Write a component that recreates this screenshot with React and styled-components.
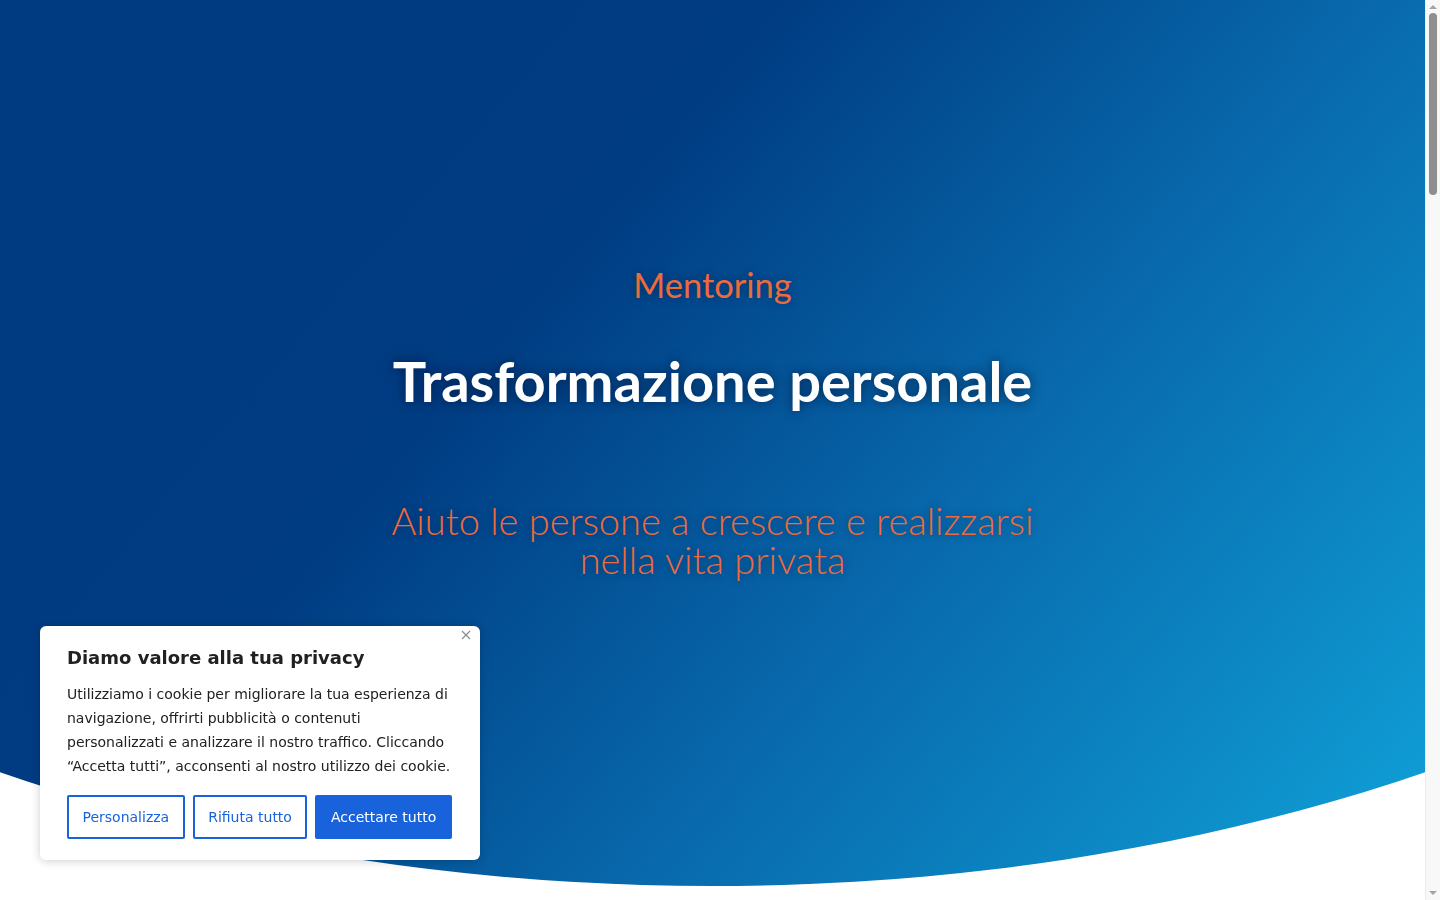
import React from 'react';
import styled, {createGlobalStyle} from 'styled-components';

const GlobalStyle = createGlobalStyle`
    html, body {
        margin: 0;
        padding: 0;
        background: #fff;
        overflow: hidden;
    }
    * {
        box-sizing: border-box;
    }
`;

const Viewport = styled.div`
    display: flex;
    height: 100vh;
`;

const Page = styled.main`
    flex: 1;
    min-width: 0;
    overflow: hidden;
    background: #fff;
`;

const Hero = styled.section`
    height: 886px;
    display: flex;
    flex-direction: column;
    align-items: center;
    padding-top: 262px;
    background: linear-gradient(130deg, #003a80 0%, #003c82 36%, #0868ab 63%, #10a2d9 100%);
    clip-path: ellipse(102% 886px at 50% 0%);
    font-family: Lato, "Open Sans", sans-serif;
    text-align: center;
`;

const Kicker = styled.div`
    color: #ec6a3c;
    font-size: 34.5px;
    font-weight: 400;
    line-height: 46px;
    text-shadow: 0 0 8px rgba(0, 20, 60, 0.45);
`;

const Title = styled.h1`
    margin: 41px 0 0;
    color: #fff;
    font-size: 56px;
    font-weight: 700;
    line-height: 64px;
    text-shadow: 0 0 12px rgba(0, 10, 40, 0.6);
`;

const Lead = styled.p`
    margin: 88px 0 0;
    color: #ec6a3c;
    font-size: 38px;
    font-weight: 300;
    line-height: 39px;
    text-shadow: 0 0 8px rgba(0, 20, 60, 0.45);
`;

const ScrollTrack = styled.aside`
    width: 15px;
    flex-shrink: 0;
    display: flex;
    flex-direction: column;
    align-items: center;
    background: #f8f8f8;
    border-left: 1px solid #ececec;
`;

const Arrow = styled.div`
    width: 0;
    height: 0;
    margin: ${p => p.$down ? 'auto 0 5px' : '5px 0 0'};
    border-left: 4px solid transparent;
    border-right: 4px solid transparent;
    ${p => p.$down ? 'border-top: 4px solid #a3a3a3;' : 'border-bottom: 4px solid #a3a3a3;'}
`;

const Thumb = styled.div`
    width: 8px;
    height: 182px;
    margin-top: 4px;
    border-radius: 4px;
    background: #8f8f8f;
`;

const Banner = styled.div`
    position: fixed;
    left: 40px;
    bottom: 40px;
    width: 440px;
    padding: 20px 27px 21px;
    background: #fff;
    border-radius: 6px;
    box-shadow: 0 1px 10px rgba(0, 0, 0, 0.2);
    font-family: "DejaVu Sans", sans-serif;
    color: #212121;
`;

const Close = styled.button`
    position: absolute;
    top: 0;
    right: 5px;
    width: 18px;
    height: 18px;
    padding: 0;
    border: 0;
    background: none;
    cursor: pointer;
    display: flex;
    align-items: center;
    justify-content: center;
`;

const BannerTitle = styled.h2`
    margin: 0 0 12px;
    font-size: 18px;
    font-weight: 700;
    line-height: 24px;
`;

const BannerText = styled.p`
    margin: 0;
    font-size: 14px;
    line-height: 24px;
`;

const Buttons = styled.div`
    display: flex;
    gap: 8px;
    margin-top: 17px;
`;

const Btn = styled.button`
    flex-shrink: 0;
    height: 44px;
    padding: 0 13.5px;
    border: 2px solid #1863dc;
    border-radius: 2px;
    background: ${p => p.$primary ? '#1863dc' : '#fff'};
    color: ${p => p.$primary ? '#fff' : '#1863dc'};
    font-family: "DejaVu Sans", sans-serif;
    font-size: 14px;
    white-space: nowrap;
    cursor: pointer;
`;

export default function App() {
    return (
        <Viewport>
            <GlobalStyle />
            <Page>
                <Hero>
                    <Kicker>Mentoring</Kicker>
                    <Title>Trasformazione personale</Title>
                    <Lead>Aiuto le persone a crescere e realizzarsi<br />nella vita privata</Lead>
                </Hero>
            </Page>
            <ScrollTrack>
                <Arrow />
                <Thumb />
                <Arrow $down />
            </ScrollTrack>
            <Banner>
                <Close aria-label="Chiudi">
                    <svg width="10" height="10" viewBox="0 0 10 10">
                        <path d="M1 1L9 9M9 1L1 9" stroke="#888" strokeWidth="1.1" />
                    </svg>
                </Close>
                <BannerTitle>Diamo valore alla tua privacy</BannerTitle>
                <BannerText>
                    Utilizziamo i cookie per migliorare la tua esperienza di navigazione, offrirti pubblicità o contenuti personalizzati e analizzare il nostro traffico. Cliccando “Accetta tutti”, acconsenti al nostro utilizzo dei cookie.
                </BannerText>
                <Buttons>
                    <Btn>Personalizza</Btn>
                    <Btn>Rifiuta tutto</Btn>
                    <Btn $primary>Accettare tutto</Btn>
                </Buttons>
            </Banner>
        </Viewport>
    );
}
